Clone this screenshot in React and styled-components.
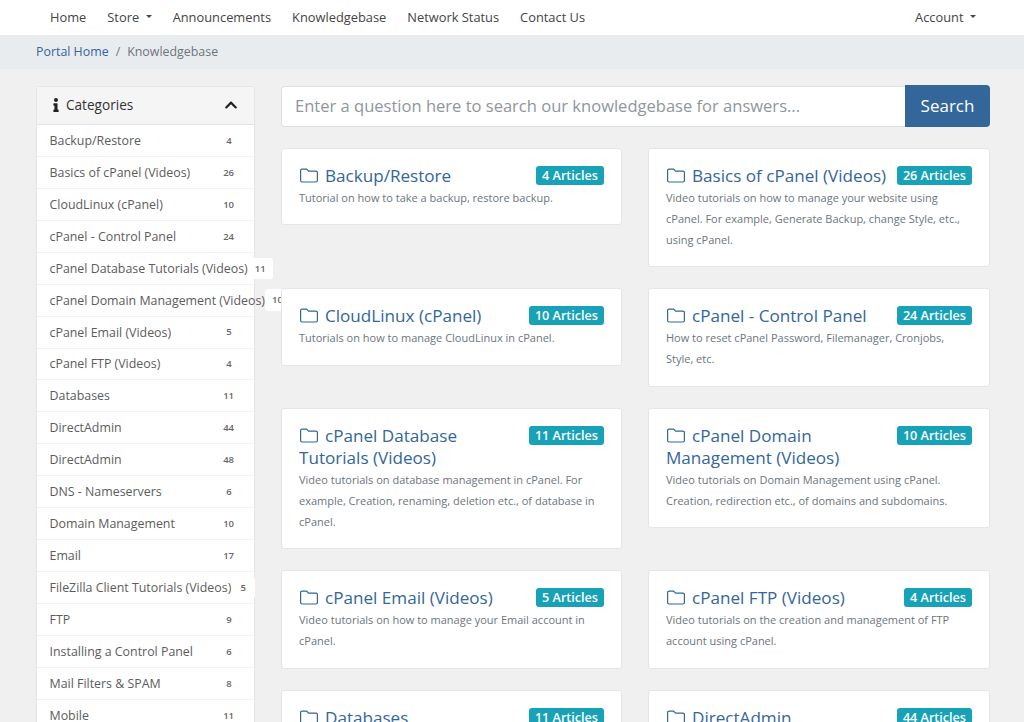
import React from "react";
import styled, { createGlobalStyle } from "styled-components";
import { FaInfo, FaChevronUp } from "react-icons/fa";

const GlobalStyle = createGlobalStyle`
    html, body {
        margin: 0;
        padding: 0;
        height: 722px;
        overflow: hidden;
        background-color: #f0f0f0;
        font-family: "Open Sans", "Liberation Sans", sans-serif;
    }
    * {
        box-sizing: border-box;
    }
`;

const Navbar = styled.nav`
    height: 35px;
    background-color: #fff;
    display: flex;
    align-items: center;
    padding: 0 48px 2px 50px;
`;

const NavItem = styled.a`
    font-size: 12.85px;
    color: #444;
    margin-right: 21px;
    display: flex;
    align-items: center;
    &:last-child {
        margin-right: 0;
        margin-left: auto;
    }
`;

const Caret = styled.span`
    width: 0;
    height: 0;
    margin-left: 6.5px;
    border-left: 3.8px solid transparent;
    border-right: 3.8px solid transparent;
    border-top: 3.8px solid #444;
`;

const Breadcrumb = styled.div`
    height: 34px;
    background-color: #e9ecef;
    display: flex;
    align-items: center;
    padding: 0 36px 2px;
    font-size: 12.4px;
    color: #6c757d;
`;

const CrumbLink = styled.a`
    color: #336699;
`;

const CrumbDivider = styled.span`
    margin: 0 7px;
`;

const Page = styled.div`
    display: flex;
    align-items: flex-start;
    padding: 17px 34px 0 36px;
    gap: 26px;
`;

const Sidebar = styled.aside`
    width: 219px;
    flex: none;
    background-color: #fff;
    border: 1px solid #e3e5e8;
    border-radius: 3px;
`;

const SidebarHeader = styled.div`
    height: 37.95px;
    background-color: #f5f5f5;
    border-bottom: 1px solid #e3e5e8;
    display: flex;
    align-items: center;
    padding: 0 16px 1px 12px;
    font-size: 13.6px;
    color: #333;
    svg {
        flex: none;
    }
`;

const HeaderTitle = styled.span`
    margin-left: 3px;
    flex: 1;
`;

const SidebarItem = styled.div`
    height: 31.95px;
    display: flex;
    align-items: center;
    padding: 0 13px 0 12.5px;
    border-bottom: 1px solid #f3f3f3;
    font-size: 12.4px;
    color: #5c5c5c;
`;

const ItemLabel = styled.span`
    flex: none;
    white-space: nowrap;
`;

const ItemCount = styled.span`
    flex: none;
    min-width: 24px;
    margin-left: auto;
    padding: 4px 7px;
    background-color: #fff;
    border-radius: 3px;
    font-size: 9.5px;
    font-weight: 600;
    line-height: 1.4;
    text-align: center;
    color: #666;
`;

const Main = styled.main`
    flex: 1;
    min-width: 0;
`;

const SearchForm = styled.form`
    display: flex;
    height: 41px;
    margin-bottom: 20.9px;
`;

const SearchInput = styled.input`
    flex: 1;
    min-width: 0;
    height: 100%;
    padding: 0 13px 2px;
    background-color: #fff;
    border: 1px solid #dde0e4;
    border-right: 0;
    border-radius: 4px 0 0 4px;
    font-family: inherit;
    font-size: 16.55px;
    outline: none;
    &::placeholder {
        color: #8f969c;
        opacity: 1;
    }
`;

const SearchButton = styled.button`
    width: 85px;
    height: 42px;
    margin-top: -1px;
    padding: 0 0 2px;
    background-color: #336699;
    border: 0;
    border-radius: 0 4px 4px 0;
    color: #fff;
    font-family: inherit;
    font-size: 17px;
`;

const CardGrid = styled.div`
    display: grid;
    grid-template-columns: 341px 342px;
    column-gap: 26px;
    row-gap: 21px;
    align-items: start;
`;

const Card = styled.article`
    background-color: #fff;
    border: 1px solid #e3e5e8;
    border-radius: 3px;
    padding: 16px 17px 16.5px 17px;
`;

const CardHead = styled.div`
    display: flex;
    align-items: flex-start;
    justify-content: space-between;
    gap: 8px;
`;

const CardTitle = styled.h3`
    margin: 0;
    font-size: 17.1px;
    font-weight: 400;
    line-height: 22px;
    color: #336699;
`;

const FolderIcon = styled.svg`
    width: 18px;
    height: 15px;
    margin: 0 7px 0 1px;
    vertical-align: -1px;
    fill: none;
    stroke: currentColor;
    stroke-width: 1.2;
`;

const Badge = styled.span`
    flex: none;
    height: 19px;
    margin-top: 1px;
    padding: 0 6px;
    background-color: #17a2b8;
    border-radius: 3px;
    color: #fff;
    font-size: 12.6px;
    font-weight: 600;
    line-height: 19px;
`;

const CardText = styled.p`
    margin: 0;
    font-size: 11px;
    line-height: 21px;
    color: #6c757d;
`;

const categories = [
    ["Backup/Restore", 4],
    ["Basics of cPanel (Videos)", 26],
    ["CloudLinux (cPanel)", 10],
    ["cPanel - Control Panel", 24],
    ["cPanel Database Tutorials (Videos)", 11],
    ["cPanel Domain Management (Videos)", 10],
    ["cPanel Email (Videos)", 5],
    ["cPanel FTP (Videos)", 4],
    ["Databases", 11],
    ["DirectAdmin", 44],
    ["DirectAdmin", 48],
    ["DNS - Nameservers", 6],
    ["Domain Management", 10],
    ["Email", 17],
    ["FileZilla Client Tutorials (Videos)", 5],
    ["FTP", 9],
    ["Installing a Control Panel", 6],
    ["Mail Filters & SPAM", 8],
    ["Mobile", 11],
];

const cards = [
    { title: "Backup/Restore", count: 4, text: "Tutorial on how to take a backup, restore backup." },
    { title: "Basics of cPanel (Videos)", count: 26, text: "Video tutorials on how to manage your website using cPanel. For example, Generate Backup, change Style, etc., using cPanel." },
    { title: "CloudLinux (cPanel)", count: 10, text: "Tutorials on how to manage CloudLinux in cPanel." },
    { title: "cPanel - Control Panel", count: 24, text: "How to reset cPanel Password, Filemanager, Cronjobs, Style, etc." },
    { title: "cPanel Database Tutorials (Videos)", count: 11, text: "Video tutorials on database management in cPanel. For example, Creation, renaming, deletion etc., of database in cPanel." },
    { title: "cPanel Domain Management (Videos)", count: 10, text: "Video tutorials on Domain Management using cPanel. Creation, redirection etc., of domains and subdomains." },
    { title: "cPanel Email (Videos)", count: 5, text: "Video tutorials on how to manage your Email account in cPanel." },
    { title: "cPanel FTP (Videos)", count: 4, text: "Video tutorials on the creation and management of FTP account using cPanel." },
    { title: "Databases", count: 11, text: "Tutorials on how to manage databases." },
    { title: "DirectAdmin", count: 44, text: "Tutorials on how to use DirectAdmin." },
];

function Folder() {
    return (
        <FolderIcon viewBox="0 0 18 15">
            <path d="M2 1.2h4.6l2 2H16a1.4 1.4 0 0 1 1.4 1.4v8A1.4 1.4 0 0 1 16 14H2a1.4 1.4 0 0 1-1.4-1.4V2.6A1.4 1.4 0 0 1 2 1.2z" />
        </FolderIcon>
    );
}

export default function App() {
    return (
        <>
            <GlobalStyle />
            <Navbar>
                <NavItem>Home</NavItem>
                <NavItem>Store<Caret /></NavItem>
                <NavItem>Announcements</NavItem>
                <NavItem>Knowledgebase</NavItem>
                <NavItem>Network Status</NavItem>
                <NavItem>Contact Us</NavItem>
                <NavItem>Account<Caret /></NavItem>
            </Navbar>
            <Breadcrumb>
                <CrumbLink>Portal Home</CrumbLink>
                <CrumbDivider>/</CrumbDivider>
                Knowledgebase
            </Breadcrumb>
            <Page>
                <Sidebar>
                    <SidebarHeader>
                        <FaInfo size={14} color="#222" />
                        <HeaderTitle>Categories</HeaderTitle>
                        <FaChevronUp size={14} color="#222" />
                    </SidebarHeader>
                    {categories.map(([name, count], i) => (
                        <SidebarItem key={i}>
                            <ItemLabel>{name}</ItemLabel>
                            <ItemCount>{count}</ItemCount>
                        </SidebarItem>
                    ))}
                </Sidebar>
                <Main>
                    <SearchForm onSubmit={(e) => e.preventDefault()}>
                        <SearchInput placeholder="Enter a question here to search our knowledgebase for answers..." />
                        <SearchButton>Search</SearchButton>
                    </SearchForm>
                    <CardGrid>
                        {cards.map((card) => (
                            <Card key={card.title}>
                                <CardHead>
                                    <CardTitle><Folder />{card.title}</CardTitle>
                                    <Badge>{card.count} Articles</Badge>
                                </CardHead>
                                <CardText>{card.text}</CardText>
                            </Card>
                        ))}
                    </CardGrid>
                </Main>
            </Page>
        </>
    );
}
